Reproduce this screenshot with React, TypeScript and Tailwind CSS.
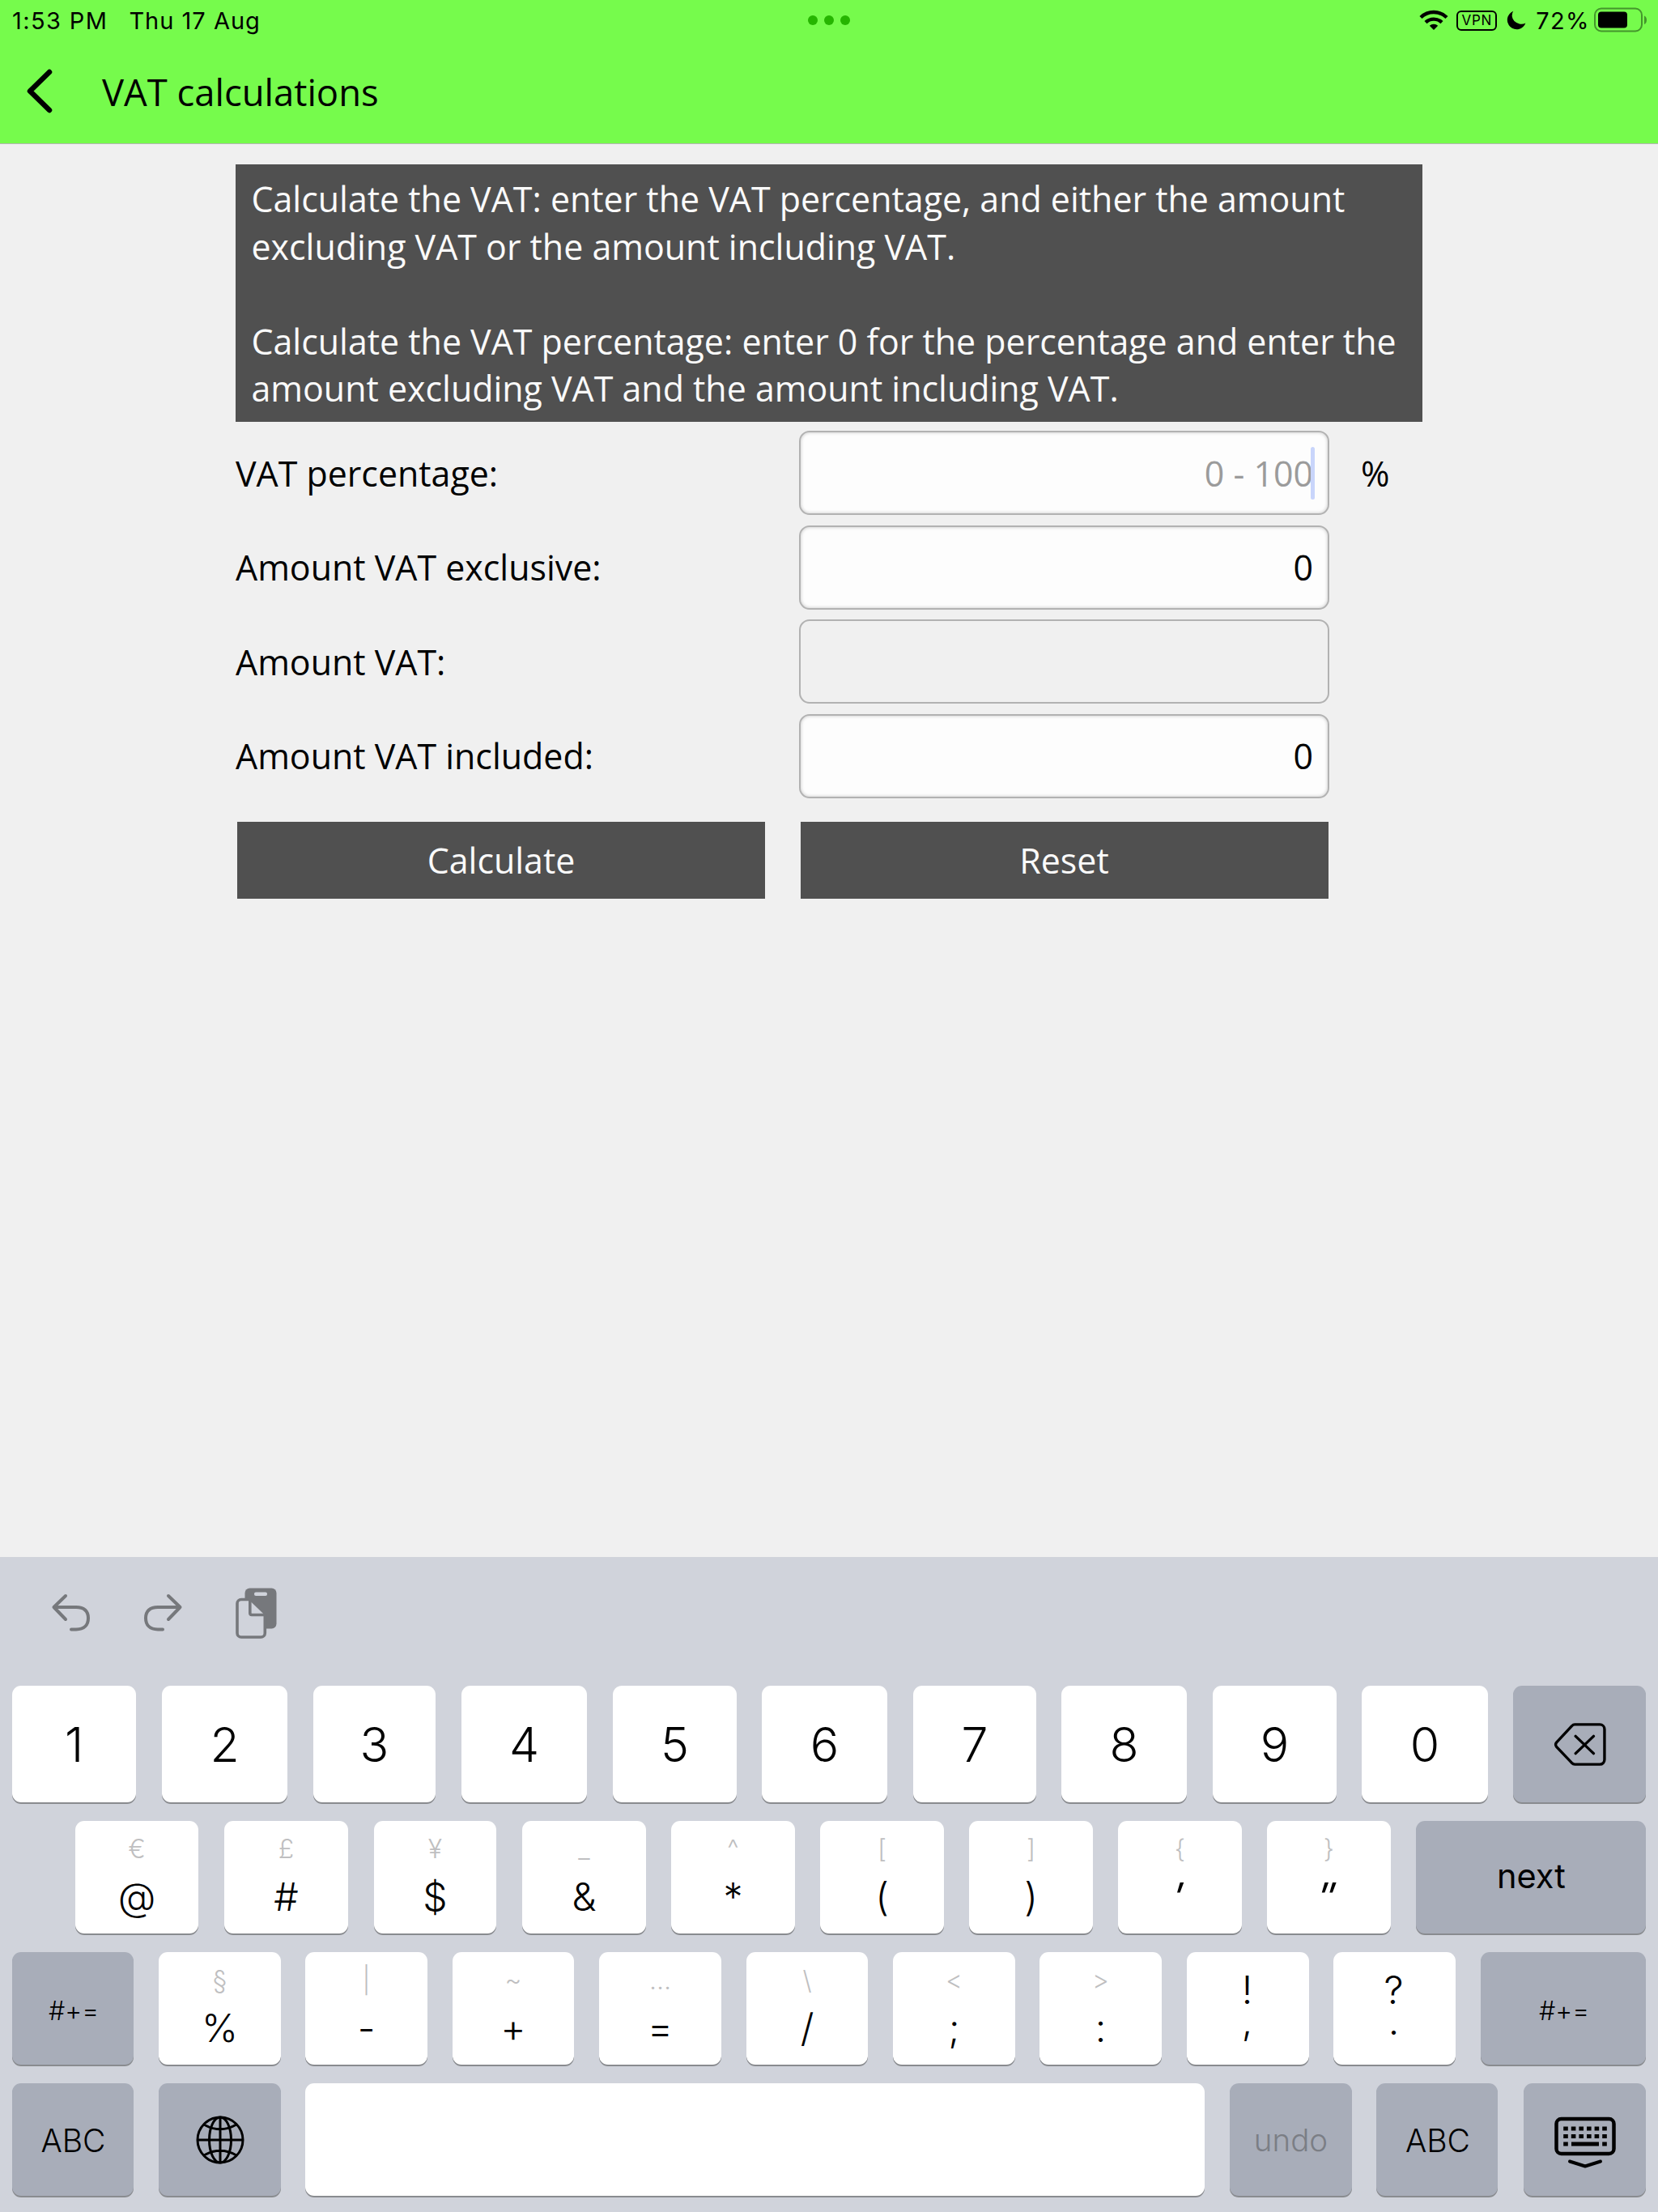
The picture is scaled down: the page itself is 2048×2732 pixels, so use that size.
import type { ReactNode } from "react";

type KeyProps = {
  w: string;
  dark?: boolean;
  children?: ReactNode;
};

function Key({ w, dark, children }: KeyProps) {
  return (
    <div
      className={`${w} ${dark ? "bg-[#a8adb9]" : "bg-white"} flex h-full shrink-0 items-center justify-center rounded-[11px] shadow-[0_2px_0_#898b8f]`}
    >
      {children}
    </div>
  );
}

function Digit({ w, children }: { w: string; children: string }) {
  return (
    <Key w={w}>
      <span className="text-[59px] leading-none font-[350]">{children}</span>
    </Key>
  );
}

function Dual({ w, top, main, quote }: { w: string; top: string; main: string; quote?: boolean }) {
  return (
    <Key w={w}>
      <div className="flex h-full flex-col items-center">
        <span className="h-[68px] text-[32px] leading-[69px] font-light text-[#bfbfc1]">{top}</span>
        <span
          className={`h-[52px] text-[48px] leading-[52px] ${quote ? "-translate-x-[4px] scale-x-[1.35] -skew-x-[14deg]" : ""} font-[350]`}
        >
          {main}
        </span>
      </div>
    </Key>
  );
}

function Punct({ w, top, main }: { w: string; top: string; main: string }) {
  return (
    <Key w={w}>
      <div className="flex h-full flex-col items-center pt-[21px] pr-[2px]">
        <span className="h-[52px] text-[48px] leading-[52px] font-[350]">{top}</span>
        <span className="h-[24px] text-[48px] leading-[24px] font-[350]">{main}</span>
      </div>
    </Key>
  );
}

function Field({ label, disabled, value, children }: { label: string; disabled?: boolean; value?: string; children?: ReactNode }) {
  return (
    <div className="flex h-[104px] items-center">
      <span className="w-[696px] pt-[2px] text-[42.92px] leading-none">{label}</span>
      <div
        className={`${disabled ? "" : "bg-[#fdfdfd] shadow-[inset_0_0_4px_#c4c4c4]"} relative flex h-[104px] w-[655px] items-center justify-end rounded-[13px] border-2 border-[#b2b2b2] pt-[2px] pr-[18px] text-[42.92px]`}
      >
        {value}
        {children}
      </div>
    </div>
  );
}

export default function App() {
  return (
    <div className="flex h-[2732px] w-[2048px] flex-col overflow-hidden bg-[#f0f0f0] font-['Open_Sans',sans-serif] text-black">
      <header className="h-[178px] border-b border-[#b5b5b5] bg-[#76fb4c]">
        <div className="grid h-[50px] grid-cols-3 items-center px-[12px] font-['Inter',sans-serif] text-[29px] leading-none tracking-[1px]">
          <div className="flex gap-[26px] pl-[3px]">
            <span className="tracking-[1.4px]">1:53 PM</span>
            <span>Thu 17 Aug</span>
          </div>
          <div className="flex justify-center gap-[8px]">
            <i className="size-[12px] rounded-full bg-[#26b500]" />
            <i className="size-[12px] rounded-full bg-[#26b500]" />
            <i className="size-[12px] rounded-full bg-[#26b500]" />
          </div>
          <div className="flex items-center justify-end">
            <svg width="36" height="26" viewBox="0 0 36 26" className="mr-[10px]">
              <g fill="none" stroke="#000" strokeWidth="4.4">
                <path d="M2 9.5a23 23 0 0 1 32 0" />
                <path d="M8 15.6a14.5 14.5 0 0 1 20 0" />
              </g>
              <path d="M18 25l-5.2-5.2a7.6 7.6 0 0 1 10.4 0z" />
            </svg>
            <span className="flex h-[25px] w-[50px] items-center justify-center rounded-[6px] border-2 border-black text-[17px] font-normal tracking-[0.7px]">
              VPN
            </span>
            <svg width="24" height="24" viewBox="0 0 24 24" className="mr-[12px] ml-[12px]">
              <path d="M8.200.8A11.600 11.600 0 1 0 23.400 15.400Q20 17.200 15.800 16.400Q7.500 14 6.700 7Q6.500 3.500 8.200.8z" />
            </svg>
            <span className="tracking-[1.4px]">72%</span>
            <svg width="68" height="32" viewBox="0 0 68 32" className="ml-[4px]">
              <rect x="2" y="1.500" width="58" height="28" rx="8" fill="none" stroke="#44952c" strokeWidth="2" />
              <rect x="6" y="5.500" width="36" height="20" rx="4" />
              <path d="M63 10.500c4 1.500 4 9 0 10.500z" fill="#44952c" />
            </svg>
          </div>
        </div>
        <div className="flex h-[126px] items-center pl-[30px]">
          <svg width="36" height="60" viewBox="0 0 36 60" fill="none" stroke="#000" strokeWidth="6.500" strokeLinecap="round" strokeLinejoin="round">
            <path d="M31 6L7 29.500L31 53" />
          </svg>
          <h1 className="ml-[60px] pt-[1px] text-[45.4px] leading-none">VAT calculations</h1>
        </div>
      </header>

      <main className="flex-1 pt-[25px] pl-[291px]">
        <div className="h-[318px] w-[1466px] bg-[#505050] pt-[14px] pl-[19.5px] text-[42.92px] leading-[58.5px] text-[#fafafa]">
          <p>
            Calculate the VAT: enter the VAT percentage, and either the amount
            <br />
            excluding VAT or the amount including VAT.
          </p>
          <p className="mt-[58.5px]">
            Calculate the VAT percentage: enter 0 for the percentage and enter the
            <br />
            amount excluding VAT and the amount including VAT.
          </p>
        </div>
        <div className="mt-[11px] flex flex-col gap-[12.5px]">
          <div className="flex items-center">
            <Field label="VAT percentage:">
              <span className="text-[#9b9b9b]">0 - 100</span>
              <span className="absolute top-[18px] right-[16px] h-[65px] w-[5px] rounded-full bg-[#c9d5fb]" />
            </Field>
            <span className="ml-[39px] pt-[2px] text-[42.92px] leading-none">%</span>
          </div>
          <Field label="Amount VAT exclusive:" value="0" />
          <Field label="Amount VAT:" disabled />
          <Field label="Amount VAT included:" value="0" />
        </div>
        <div className="mt-[29px] ml-[2px] flex gap-[43.5px] text-[42.92px] text-[#fafafa]">
          <button className="h-[95px] w-[652px] bg-[#505050] pt-[2px]">Calculate</button>
          <button className="h-[95px] w-[652px] bg-[#505050] pt-[2px]">Reset</button>
        </div>
      </main>

      <footer className="flex h-[809px] flex-col bg-[#d0d3db] pl-[15px] font-['Inter',sans-serif]">
        <div className="flex h-[159px] items-start pt-[34px] pl-[45px]">
          <svg width="54" height="64" viewBox="0 0 54 64" fill="none" stroke="#76787c" strokeWidth="4" strokeLinecap="round" strokeLinejoin="round">
            <path d="M21 14L6.500 28L21 43M6.500 28H34C44 28 49 33 49 41.500S44 55.500 34 55.500H28" />
          </svg>
          <svg width="54" height="64" viewBox="0 0 54 64" fill="none" stroke="#76787c" strokeWidth="4" strokeLinecap="round" strokeLinejoin="round" className="ml-[60px]">
            <path d="M34 14L48.500 28L34 43M48.500 28H21C11 28 6 33 6 41.500S11 55.500 21 55.500H27" />
          </svg>
          <svg width="56" height="68" viewBox="0 0 56 68" className="ml-[61px]">
            <rect x="13.500" y="4.500" width="39" height="50" rx="6" fill="#76787c" />
            <rect x="25" y="9.500" width="16" height="4.500" rx="2" fill="#d0d3db" />
            <path d="M4 18.500H18L38.300 38V64H4z" fill="#d0d3db" />
            <path d="M20 18.500H9a5 5 0 0 0-5 5V60a5 5 0 0 0 5 5H33.300a5 5 0 0 0 5-5V37.500H22a2.200 2.200 0 0 1-2.200-2.200V18.500" fill="none" stroke="#76787c" strokeWidth="3.600" />
          </svg>
        </div>
        <div className="flex h-[144px]">
          <Digit w="w-[153px] mr-[32px]">1</Digit>
          <Digit w="w-[155px] mr-[32px]">2</Digit>
          <Digit w="w-[151px] mr-[32px]">3</Digit>
          <Digit w="w-[155px] mr-[32px]">4</Digit>
          <Digit w="w-[153px] mr-[31px]">5</Digit>
          <Digit w="w-[155px] mr-[32px]">6</Digit>
          <Digit w="w-[152px] mr-[31px]">7</Digit>
          <Digit w="w-[155px] mr-[32px]">8</Digit>
          <Digit w="w-[153px] mr-[31px]">9</Digit>
          <Digit w="w-[156px] mr-[31px]">0</Digit>
          <Key w="w-[164px]" dark>
            <svg width="66" height="56" viewBox="0 0 68 58" fill="none" stroke="#000" strokeWidth="3.500" strokeLinecap="round" strokeLinejoin="round" className="mt-[1px] ml-[1px]">
              <path d="M27 3H59a6 6 0 0 1 6 6V48a6 6 0 0 1-6 6H27Q25 54 23 52L3.500 31.500Q1.500 28.500 3.500 26L23 5Q25 3 27 3zM28 18L51 40M51 18L28 40" />
            </svg>
          </Key>
        </div>
        <div className="mt-[23px] ml-[78px] flex h-[139px]">
          <Dual w="w-[152px] mr-[32px]" top="€" main="@" />
          <Dual w="w-[153px] mr-[32px]" top="£" main="#" />
          <Dual w="w-[151px] mr-[32px]" top="¥" main="$" />
          <Dual w="w-[153px] mr-[31px]" top="_" main="&" />
          <Dual w="w-[153px] mr-[31px]" top="^" main="*" />
          <Dual w="w-[153px] mr-[31px]" top="[" main="(" />
          <Dual w="w-[153px] mr-[31px]" top="]" main=")" />
          <Dual w="w-[153px] mr-[31px]" top="{" main="'" quote />
          <Dual w="w-[153px] mr-[31px]" top="}" main={'"'} quote />
          <Key w="w-[284px]" dark>
            <span className="-mt-[2px] ml-[1px] text-[41.5px] leading-none font-[370]">next</span>
          </Key>
        </div>
        <div className="mt-[23px] flex h-[139px]">
          <Key w="w-[150px] mr-[31px]" dark>
            <span className="mt-[6px] ml-[2px] text-[32px] leading-none font-[350]">#+=</span>
          </Key>
          <Dual w="w-[151px] mr-[30px]" top="§" main="%" />
          <Dual w="w-[151px] mr-[31px]" top="|" main="-" />
          <Dual w="w-[150px] mr-[31px]" top="~" main="+" />
          <Dual w="w-[151px] mr-[31px]" top="…" main="=" />
          <Dual w="w-[150px] mr-[31px]" top="\" main="/" />
          <Dual w="w-[151px] mr-[30px]" top="&lt;" main=";" />
          <Dual w="w-[151px] mr-[31px]" top="&gt;" main=":" />
          <Punct w="w-[151px] mr-[30px]" top="!" main="," />
          <Punct w="w-[151px] mr-[31px]" top="?" main="." />
          <Key w="w-[204px]" dark>
            <span className="mt-[6px] ml-[2px] text-[32px] leading-none font-[350]">#+=</span>
          </Key>
        </div>
        <div className="mt-[23px] flex h-[139px]">
          <Key w="w-[150px] mr-[31px]" dark>
            <span className="mt-[1px] ml-[1px] text-[39px] leading-none font-[350]">ABC</span>
          </Key>
          <Key w="w-[151px] mr-[30px]" dark>
            <svg width="60" height="60" viewBox="0 0 60 60" fill="none" stroke="#000" strokeWidth="3">
              <circle cx="30" cy="30" r="28" />
              <ellipse cx="30" cy="30" rx="13.500" ry="28" />
              <path d="M30 2V58M2 30H58M10 11Q30 22.500 50 11M10 49Q30 37.500 50 49" />
            </svg>
          </Key>
          <Key w="w-[1111px] mr-[31px]" />
          <Key w="w-[151px] mr-[30px]" dark>
            <span className="mt-[1px] text-[38.500px] leading-none font-[350] text-[#7b7e85]">undo</span>
          </Key>
          <Key w="w-[150px] mr-[32px]" dark>
            <span className="mt-[1px] ml-[2px] text-[39px] leading-none font-[350]">ABC</span>
          </Key>
          <Key w="w-[151px]" dark>
            <svg width="76" height="64" viewBox="0 0 76 64" className="mt-[6px]">
              <rect x="2.500" y="3" width="71" height="43" rx="6" fill="none" stroke="#000" strokeWidth="4.500" />
              {[14, 23.6, 33.2, 42.8, 52.4, 62].map((x) => (
                <g key={x}>
                  <rect x={x - 2.8} y="12.500" width="5.600" height="5" />
                  <rect x={x - 2.8} y="22" width="5.600" height="5" />
                </g>
              ))}
              <path d="M11.200 31.500h5.600v5h-5.600zM59.200 31.500h5.600v5h-5.600zM21 31.500h34v5H21z" />
              <path d="M19 55.500L38 61.500L57 55.500" fill="none" stroke="#000" strokeWidth="4" strokeLinecap="round" strokeLinejoin="round" />
            </svg>
          </Key>
        </div>
      </footer>
    </div>
  );
}
